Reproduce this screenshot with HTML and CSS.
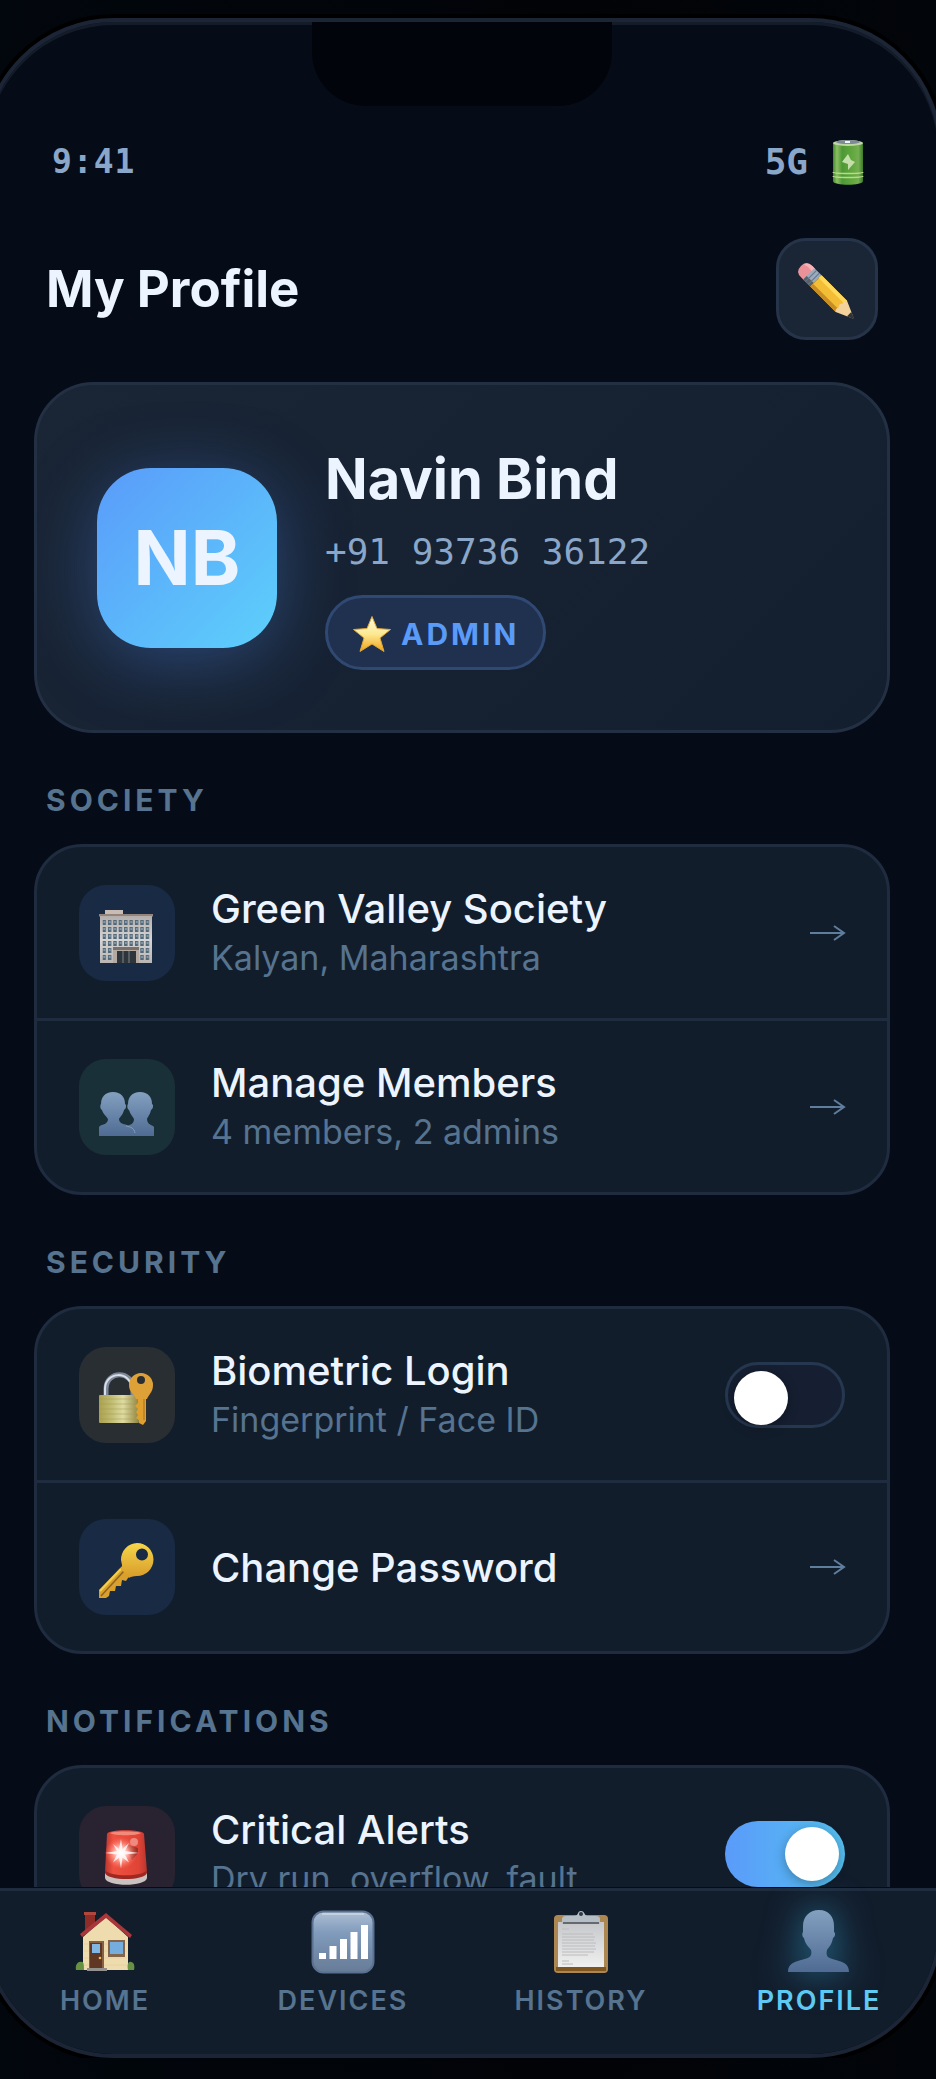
FILE: index.html
```html
<!DOCTYPE html>
<html lang="en">
<head>
    <meta charset="UTF-8">
    <meta name="viewport" content="width=device-width, initial-scale=1.0">
    <title>My Profile</title>
    <link rel="stylesheet" href="styles.css">
</head>
<body>
    <div class="phone">
        <div class="notch"></div>

        <div class="status-bar">
            <span class="time">9:41</span>
            <span class="signal">5G
                <svg class="battery" viewBox="0 0 32 46" aria-hidden="true">
                    <defs>
                        <linearGradient id="cell"><stop offset="0" stop-color="#3f8a2b"/><stop offset=".13" stop-color="#8cbf63"/><stop offset=".3" stop-color="#4d9835"/><stop offset=".65" stop-color="#63a83e"/><stop offset=".85" stop-color="#74ad51"/><stop offset="1" stop-color="#3b7c28"/></linearGradient>
                    </defs>
                    <path d="M1 4v38c0 5 30 5 30 0V4z" fill="url(#cell)"/>
                    <ellipse cx="16" cy="4" rx="15" ry="3" fill="#bfd6a5"/>
                    <ellipse cx="16" cy="3" rx="12" ry="2" fill="#7e8a96"/>
                    <path d="M13 3h5" stroke="#edf3fa" stroke-width="2"/>
                    <path d="M1 33c0 2 30 2 30 0M1 37c0 2 30 2 30 0" stroke="#b9d98d" stroke-width="1.4" fill="none"/>
                    <path d="M16 15l3 6 4 2-7 8 0-6-6-2z" fill="#c5dfac"/>
                </svg>
            </span>
        </div>

        <header class="header">
            <h1>My Profile</h1>
            <button type="button" class="edit-btn" aria-label="Edit profile">
                <svg class="icon" viewBox="0 0 56 56" aria-hidden="true">
                    <g transform="translate(7 7) rotate(45)">
                        <path d="M5-8h-4q-8 0-8 7v2q0 7 8 7h4z" fill="#eb9299"/>
                        <path d="M5-8h-4q-6 0-7 5 3-2 11-1z" fill="#f7b3b5"/>
                        <path d="M4-8h10V8H4z" fill="#9aabbd"/>
                        <path d="M4 3h10v5H4z" fill="#5a6068"/>
                        <path d="M7-8V8M11-8V8" stroke="#657689" stroke-width="1"/>
                        <path d="M14-8h36v16H14z" fill="#f3bd35"/>
                        <path d="M14-8h36v4H14z" fill="#ffd95c"/>
                        <path d="M14 4h36v4H14z" fill="#c98d25"/>
                        <path d="M50-8l18 8-18 8q-3-2-1-5-3-3 0-6-2-3 1-5z" fill="#f3d39b"/>
                        <path d="M61-3l8 3-8 3z" fill="#30343a"/>
                    </g>
                </svg>
            </button>
        </header>

        <main class="content">
            <section class="profile-card">
                <div class="avatar">NB</div>
                <div class="profile-info">
                    <h2 class="profile-name">Navin Bind</h2>
                    <div class="profile-phone">+91 93736 36122</div>
                    <div class="badge">
                        <svg class="star" viewBox="0 0 40 38" aria-hidden="true">
                            <defs><linearGradient id="gold" x2="0" y2="1"><stop offset="0" stop-color="#fffbe0"/><stop offset=".5" stop-color="#fde992"/><stop offset="1" stop-color="#f0a417"/></linearGradient></defs>
                            <path d="M20 1.500l5 12 13.500 1-10.500 8.500 4 13.500-12-7.500-12 7.500 4-13.500L1.500 14.500l13.500-1z" fill="url(#gold)" stroke="#dfa838" stroke-width="1" stroke-linejoin="round"/>
                        </svg>
                        ADMIN
                    </div>
                </div>
            </section>

            <h3 class="section-title">SOCIETY</h3>
            <div class="list">
                <a href="#" class="row">
                    <span class="tile tile-blue">
                        <svg class="icon" viewBox="0 0 56 56" aria-hidden="true">
                            <defs>
                                <linearGradient id="wall" x2="0" y2="1"><stop offset="0" stop-color="#b4aeab"/><stop offset=".5" stop-color="#d6d5d5"/><stop offset="1" stop-color="#b9b6b3"/></linearGradient>
                                <pattern id="windows" x="4.500" y="11" width="5.400" height="7" patternUnits="userSpaceOnUse"><path d="M0 0h3.400v5H0z" fill="#536979"/><path d="M1 1h1.500v2H1z" fill="#8aa2b3"/></pattern>
                            </defs>
                            <path d="M7 1h18v5H7z" fill="#c9bcb4"/>
                            <path d="M1 5h54v2.500H1z" fill="#93847c"/>
                            <path d="M2 7h52v47H2z" fill="url(#wall)"/>
                            <path d="M4.500 11h48v41h-48z" fill="url(#windows)"/>
                            <path d="M15 38h26v16H15z" fill="#b5aaa2"/>
                            <path d="M15 38h26v3H15z" fill="#77706c"/>
                            <path d="M19 42h19v12H19z" fill="#2e363c"/>
                            <path d="M25 42v12M31 42v12" stroke="#7d868b" stroke-width="1"/>
                        </svg>
                    </span>
                    <span class="row-text">
                        <span class="row-title">Green Valley Society</span>
                        <span class="row-sub">Kalyan, Maharashtra</span>
                    </span>
                    <svg class="arrow" viewBox="0 0 36 18" aria-hidden="true"><path d="M1 9h33M25 2l10 7-10 7"/></svg>
                </a>
                <a href="#" class="row">
                    <span class="tile tile-green">
                        <svg class="icon" viewBox="0 0 56 56" aria-hidden="true">
                            <defs><linearGradient id="bust" x2="0" y2="1"><stop offset="0" stop-color="#83a0c0"/><stop offset="1" stop-color="#4f6b93"/></linearGradient></defs>
                            <path d="M42 9c8 0 12 5 12 12 2 1 1 5-1 6-1 5-4 8-4 9 0 6 6 6 7 8v9H29v-9c2-3 7-2 7-8-1-2-4-5-5-9-2-1-2-5-1-6 0-7 4-12 12-12z" fill="url(#bust)"/>
                            <path d="M15 9c8 0 12 5 12 12 2 1 1 5-1 6-1 5-5 8-5 9 0 8 16 4 16 12v5H1v-9c2-3 9-2 9-8-1-2-5-5-6-9-2-1-2-5-1-6 0-7 4-12 12-12z" fill="url(#bust)"/>
                            <path d="M28 43c5 1 8 2 9 7" stroke="#7f9dbd" fill="none"/>
                        </svg>
                    </span>
                    <span class="row-text">
                        <span class="row-title">Manage Members</span>
                        <span class="row-sub">4 members, 2 admins</span>
                    </span>
                    <svg class="arrow" viewBox="0 0 36 18" aria-hidden="true"><path d="M1 9h33M25 2l10 7-10 7"/></svg>
                </a>
            </div>

            <h3 class="section-title">SECURITY</h3>
            <div class="list">
                <label class="row">
                    <span class="tile tile-amber">
                        <svg class="icon" viewBox="0 0 56 56" aria-hidden="true">
                            <defs>
                                <linearGradient id="brass"><stop offset="0" stop-color="#aaa04f"/><stop offset=".3" stop-color="#c0bb70"/><stop offset=".6" stop-color="#dedba2"/><stop offset="1" stop-color="#8f833d"/></linearGradient>
                            </defs>
                            <path d="M8 26V18C8-1 35-1 35 18v8" fill="none" stroke="#7d8798" stroke-width="5"/>
                            <path d="M7 26V18C7 0 33-1 34 18" fill="none" stroke="#d7deea" stroke-width="2"/>
                            <rect x="1" y="24" width="40" height="28" rx="1" fill="url(#brass)"/>
                            <path d="M1 28h40M1 33h40M1 38h40M1 43h40M1 48h40" stroke="#a09b52" stroke-width=".5"/>
                            <path d="M40 26h8v24l-3 4-4-2v-3l-3-2 2-3-2-3 2-3-3-3 3-3z" fill="#dfa02f"/>
                            <path fill-rule="evenodd" d="M43 2a12 12 0 0 1 12 12c0 7-4 9-6 14H38c-2-5-7-7-7-14A12 12 0 0 1 43 2zm0 3a4 4 0 1 0 0 8 4 4 0 0 0 0-8z" fill="#dda138"/>
                            <path d="M46 28v21" stroke="#a76e18"/>
                        </svg>
                    </span>
                    <span class="row-text">
                        <span class="row-title">Biometric Login</span>
                        <span class="row-sub">Fingerprint / Face ID</span>
                    </span>
                    <input type="checkbox" class="toggle">
                </label>
                <a href="#" class="row">
                    <span class="tile tile-blue">
                        <svg class="icon" viewBox="0 0 56 56" aria-hidden="true">
                            <defs><linearGradient id="key" x2="0" y2="1"><stop offset="0" stop-color="#f5d64b"/><stop offset="1" stop-color="#d79b29"/></linearGradient></defs>
                            <path d="M24 23l8 9-4 6-4-1-1 6-5 0-1 5-5 0-1 5-3 2H1v-8z" fill="#d9a02c"/>
                            <path d="M26 28L3 53" stroke="#8c6321" stroke-width="1.500"/>
                            <path d="M23 26L2 48" stroke="#f2cf51" stroke-width="2"/>
                            <path fill-rule="evenodd" d="M39 0a16.500 16.500 0 1 1 0 33c-4 0-7 1-8 2l-8-9c2-1 1-4 0-9A16.500 16.500 0 0 1 39 0zm5 5.500a6 6 0 1 0 0 12 6 6 0 0 0 0-12z" fill="url(#key)"/>
                        </svg>
                    </span>
                    <span class="row-text">
                        <span class="row-title">Change Password</span>
                    </span>
                    <svg class="arrow" viewBox="0 0 36 18" aria-hidden="true"><path d="M1 9h33M25 2l10 7-10 7"/></svg>
                </a>
            </div>

            <h3 class="section-title">NOTIFICATIONS</h3>
            <div class="list">
                <label class="row">
                    <span class="tile tile-red">
                        <svg class="icon" viewBox="0 0 56 56" aria-hidden="true">
                            <defs>
                                <linearGradient id="lamp"><stop offset="0" stop-color="#b9352e"/><stop offset=".2" stop-color="#ef5140"/><stop offset=".8" stop-color="#e04436"/><stop offset="1" stop-color="#b8352d"/></linearGradient>
                                <radialGradient id="flash"><stop offset="0" stop-color="#fff"/><stop offset=".4" stop-color="#ffb6ac"/><stop offset="1" stop-color="#ff6a57" stop-opacity="0"/></radialGradient>
                            </defs>
                            <path d="M7 42v6c1 9 41 9 42 0v-6z" fill="#c9c2bf"/>
                            <path d="M9 4c1-5 36-5 37 0l3 38c-3 8-39 8-42 0z" fill="url(#lamp)"/>
                            <path d="M7 40c4 7 38 7 42 0v3c-3 8-39 8-42 0z" fill="#9f2922"/>
                            <path d="M12 3c4-2 27-2 31 0-4 3-27 3-31 0z" fill="#f4897a"/>
                            <path d="M28 14l12 4v5l-9 1zm3 10l9-1-6 7z" fill="#9c332a"/>
                            <circle cx="36" cy="12" r="4" fill="#ee8a7f"/>
                            <circle cx="23" cy="23" r="16" fill="url(#flash)"/>
                            <path d="M23 9l1.500 10 6.500-6-4 8 14 2-14 1.500 4 8-6.500-5-1.500 11-2-11-6 5 4-8-12-1.500 12-2-4-7 6 5z" fill="#fff" opacity=".8"/>
                        </svg>
                    </span>
                    <span class="row-text">
                        <span class="row-title">Critical Alerts</span>
                        <span class="row-sub">Dry run, overflow, fault</span>
                    </span>
                    <input type="checkbox" class="toggle" checked>
                </label>
            </div>
        </main>

        <nav class="bottom-nav">
            <a href="#" class="nav-item">
                <svg class="nav-icon" viewBox="0 0 66 66" aria-hidden="true">
                    <path d="M13 4h10v14L13 26z" fill="#8e2d28"/>
                    <path d="M12 3h12v3H12z" fill="#b0463c"/>
                    <path d="M11 28L34 8l22 20v33H11z" fill="#efdcae"/>
                    <path d="M12 35h43M12 42h43M12 49h43M12 56h43" stroke="#dfcb9c" stroke-width=".6"/>
                    <path d="M34 4l26 22-2 3-24-20L10 28l-2-3z" fill="#a8363a"/>
                    <path d="M17 32h15v29H17z" fill="#876044"/>
                    <path d="M18 34h12v26H18z" fill="#603723"/>
                    <path d="M20 35h8v9h-8z" fill="#82b6e2"/>
                    <circle cx="28" cy="49" r="1.300" fill="#edbc58"/>
                    <path d="M36 31h17v17H36z" fill="#83654c"/>
                    <path d="M38 33h13v12H38z" fill="#75aede"/>
                    <path d="M4 61c-1-5 2-9 5-8 3-1 3 4 3 8zm52 0c-1-5 0-9 3-8 3 0 4 4 3 8z" fill="#669142"/>
                    <path d="M15 59h20v3H15z" fill="#93908e"/>
                </svg>
                HOME
            </a>
            <a href="#" class="nav-item">
                <svg class="nav-icon" viewBox="0 0 66 66" aria-hidden="true">
                    <defs><linearGradient id="bars" x2="0" y2="1"><stop offset="0" stop-color="#aebfd4"/><stop offset=".35" stop-color="#809bbc"/><stop offset="1" stop-color="#667b96"/></linearGradient></defs>
                    <rect x="2.500" y="2.500" width="61" height="61" rx="11" fill="url(#bars)" stroke="#5a7190" stroke-width="2"/>
                    <path d="M12 5h42" stroke="#c3d0e0" stroke-width="2"/>
                    <path d="M9 44h7v6H9zm10.500-7h7v13h-7zM30 30h7v20h-7zm10.500-7h7v27h-7zM51 16h7v34h-7z" fill="#fff"/>
                </svg>
                DEVICES
            </a>
            <a href="#" class="nav-item">
                <svg class="nav-icon" viewBox="0 0 66 66" aria-hidden="true">
                    <defs><linearGradient id="paper" x2="0" y2="1"><stop offset="0" stop-color="#c5c7ca"/><stop offset="1" stop-color="#f0f0f0"/></linearGradient></defs>
                    <rect x="6" y="6" width="54" height="58" rx="4" fill="#ad8752"/>
                    <path d="M8 58h50v4H8z" fill="#805620"/>
                    <path d="M10 13h46v45H10z" fill="url(#paper)"/>
                    <path d="M14 15v-5q0-3 4-3h8c5 0 3-5 7-5s3 5 7 5h8q4 0 4 3v5z" fill="#b5bdc5"/>
                    <path d="M15 14h36" stroke="#656a70" stroke-width="2"/>
                    <circle cx="33" cy="5" r="2" fill="#303944"/>
                    <path d="M14 20h7M14 25h31M14 28h33M14 31h32M14 34h34M14 37h33M14 40h34M14 43h32M14 46h26M14 52h7M14 55h11" stroke="#bcbcbe" stroke-width="1"/>
                </svg>
                HISTORY
            </a>
            <a href="#" class="nav-item active">
                <svg class="nav-icon" viewBox="0 0 66 66" aria-hidden="true">
                    <path d="M33 1c10 0 15 7 15 16v6c2 1 1 5-1 6-1 6-4 9-6 12-2 9 4 8 12 11 7 2 10 5 10 11H2c0-6 3-9 10-11 8-3 15-2 13-11-2-3-6-6-7-12-2-1-2-5-1-6v-6c0-9 6-16 16-16z" fill="url(#bust)"/>
                </svg>
                PROFILE
            </a>
        </nav>
    </div>
</body>
</html>
```

FILE: styles.css
```css
* {
    box-sizing: border-box;
}

body {
    margin: 0;
    overflow: hidden;
    background: linear-gradient(90deg, #02070d, #010307 60%, #020509);
    color: #ebf4ff;
    font-family: Inter, "Liberation Sans", sans-serif;
}

h1, h2, h3 {
    margin: 0;
}

a {
    color: inherit;
    text-decoration: none;
}

svg {
    display: block;
    flex: none;
    overflow: visible;
}

/* device frame, a little wider than the window */
.phone {
    display: flex;
    flex-direction: column;
    height: calc(100vh - 39px);
    margin: 18px -6px 0 -18px;
    overflow: hidden;
    border: 4px solid #1b2536;
    border-radius: 132px;
    background-color: #060c17;
    box-shadow: 0 0 0 4px #000, inset 0 3px 0 #141c29;
}

.notch {
    flex: none;
    width: 300px;
    height: 84px;
    margin: 0 auto;
    border-radius: 0 0 54px 54px;
    background-color: #02040b;
}

.status-bar {
    display: flex;
    justify-content: space-between;
    align-items: center;
    padding: 32px 66px 0;
    color: #8aa6c8;
    font-family: "DejaVu Sans Mono", "Liberation Mono", monospace;
    font-weight: bold;
    line-height: 48px;
}

.time {
    font-size: 33px;
    letter-spacing: 1px;
}

.signal {
    display: flex;
    align-items: center;
    gap: 24px;
    padding-right: 8px;
    font-size: 36px;
}

.battery {
    width: 32px;
    height: 46px;
}

.header {
    display: flex;
    justify-content: space-between;
    align-items: center;
    padding: 52px 60px 42px;
}

.header h1 {
    font-size: 51px;
    font-weight: 700;
    line-height: 64px;
}

.edit-btn {
    display: flex;
    justify-content: center;
    align-items: center;
    width: 102px;
    height: 102px;
    padding: 6px 0 0;
    border: 3px solid #263449;
    border-radius: 30px;
    background-color: #1a2535;
    cursor: pointer;
}

.icon {
    width: 56px;
    height: 56px;
}

.content {
    flex: 1;
    min-height: 0;
    padding: 0 48px;
    overflow: hidden;
}

.profile-card {
    display: flex;
    align-items: center;
    gap: 48px;
    padding: 60px;
    border: 3px solid #233044;
    border-radius: 60px;
    background: linear-gradient(135deg, #1a2535, #131e2f);
}

.avatar {
    display: flex;
    justify-content: center;
    align-items: center;
    flex: none;
    width: 180px;
    height: 180px;
    border-radius: 54px;
    background: linear-gradient(135deg, #5a9bfa, #5dd0fb);
    box-shadow: 0 12px 72px rgba(79, 142, 247, 0.35);
    font-size: 75px;
    font-weight: 700;
}

.profile-name {
    margin-bottom: 15px;
    font-size: 56px;
    font-weight: 700;
    line-height: 68px;
}

.profile-phone {
    margin-bottom: 19px;
    color: #8aa6c8;
    font-family: "DejaVu Sans Mono", "Liberation Mono", monospace;
    font-size: 36px;
    line-height: 48px;
}

.badge {
    display: inline-flex;
    align-items: center;
    gap: 9px;
    height: 75px;
    padding: 3px 24px 0;
    border: 3px solid #304973;
    border-radius: 60px;
    background-color: #20304f;
    color: #5a9bf8;
    font-size: 30px;
    font-weight: 700;
    letter-spacing: 3px;
    vertical-align: top;
}

.star {
    width: 40px;
    height: 38px;
}

.section-title {
    padding: 48px 12px 25px;
    color: #56738f;
    font-size: 30px;
    font-weight: 700;
    letter-spacing: 4px;
    line-height: 38px;
}

.list {
    border: 3px solid #1f2c3f;
    border-radius: 48px;
    background-color: #121d2c;
}

.row {
    display: flex;
    align-items: center;
    gap: 36px;
    padding: 36px 42px;
}

.row + .row {
    border-top: 3px solid #1f2c3f;
}

.tile {
    display: flex;
    justify-content: center;
    align-items: center;
    flex: none;
    width: 96px;
    height: 96px;
    padding: 8px 2px 0 0;
    border-radius: 27px;
}

.tile-blue {
    background-color: #192a44;
}

.tile-green {
    background-color: #1a3039;
}

.tile-amber {
    background-color: #292e33;
}

.tile-red {
    background-color: #282231;
}

.row-text {
    flex: 1;
}

.row-title,
.row-sub {
    display: block;
}

.row-title {
    font-size: 40px;
    font-weight: 500;
    line-height: 51px;
}

.row-sub {
    color: #56738f;
    font-size: 34px;
    line-height: 48px;
}

.arrow {
    width: 36px;
    height: 18px;
    fill: none;
    stroke: #5f7e9e;
    stroke-width: 2;
}

.toggle {
    appearance: none;
    flex: none;
    width: 120px;
    height: 66px;
    margin: 0;
    padding: 6px;
    border: 3px solid #263750;
    border-radius: 33px;
    background-color: #151f31;
    cursor: pointer;
}

.toggle::before {
    content: "";
    display: block;
    width: 54px;
    height: 54px;
    border-radius: 50%;
    background-color: #fff;
    box-shadow: 0 3px 12px rgba(0, 0, 0, 0.3);
}

.toggle:checked {
    border: 0;
    background: linear-gradient(90deg, #5a9bfa, #55c0f0);
}

.toggle:checked::before {
    margin-left: auto;
}

.bottom-nav {
    display: flex;
    flex: none;
    margin-top: 1px;
    padding: 18px 0 36px;
    border-top: 3px solid #1f2c3f;
    background-color: #121d2c;
}

.nav-item {
    display: flex;
    flex: 1;
    flex-direction: column;
    align-items: center;
    gap: 9px;
    color: #56738f;
    font-size: 27px;
    font-weight: 600;
    letter-spacing: 2px;
    line-height: 34px;
}

.nav-item.active {
    color: #5fcbf4;
}

.nav-icon {
    width: 66px;
    height: 66px;
}

.active .nav-icon {
    filter: drop-shadow(0 0 18px rgba(56, 180, 230, 0.55));
}
```
